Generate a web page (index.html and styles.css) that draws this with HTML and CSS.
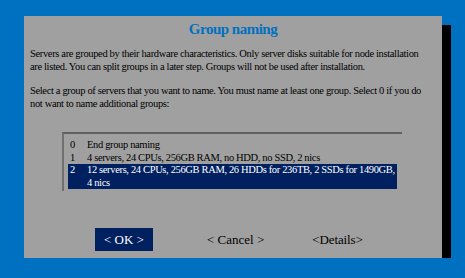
FILE: index.html
```html
<!DOCTYPE html>
<html>
<head>
<title>Group naming</title>
<link rel="stylesheet" href="styles.css">
</head>
<body>

<!-- the dialog box, shadow comes from box-shadow -->
<div class="dialog">
  <h1 class="title">Group naming</h1>

  <p class="msg">Servers are grouped by their hardware characteristics. Only server disks suitable for node installation are listed. You can split groups in a later step. Groups will not be used after installation.</p>

  <p class="msg">Select a group of servers that you want to name. You must name at least one group. Select 0 if you do not want to name additional groups:</p>

  <div class="menu">
    <div class="item">
      <span class="tag">0</span><span class="label">End group naming</span>
    </div>
    <div class="item">
      <span class="tag">1</span><span class="label">4 servers, 24 CPUs, 256GB RAM, no HDD, no SSD, 2 nics</span>
    </div>
    <div class="item selected">
      <span class="tag">2</span><span class="label">12 servers, 24 CPUs, 256GB RAM, 26 HDDs for 236TB, 2 SSDs for 1490GB, 4 nics</span>
    </div>
  </div>

  <div class="buttons">
    <span class="btn active">&lt; OK &gt;</span>
    <span class="btn cancel">&lt; Cancel &gt;</span>
    <span class="btn details">&lt;Details&gt;</span>
  </div>
</div>

</body>
</html>
```

FILE: styles.css
```css
body {
  margin: 0;
  background-color: #0070c0;
  font-family: "Liberation Serif", "Times New Roman", serif;
  font-size: 10.5px;
  letter-spacing: -0.35px;
  color: #000;
}

/* grey dialog with a hard black shadow */
.dialog {
  margin: 16px 0 0 24px;
  width: 418px;
  height: 242px;
  background-color: #a0a0a0;
  box-shadow: 9px 9px 0 #000;
  box-sizing: border-box;
  padding: 6px 12px 0 6px;
}

.title {
  margin: 0 0 0 6px;
  text-align: center;
  color: #0070c0;
  font-size: 15px;
  font-weight: bold;
  letter-spacing: -0.5px;
  line-height: 14px;
}

.msg {
  margin: 12px 0 0 0;
  line-height: 12.5px;
}

/* the list box */
.menu {
  margin: 22px 0 0 32px;
  width: 340px;
  border-top: 2px solid #606060;
  border-left: 2px solid #707070;
  padding: 5px 5px 2px 4px;
  box-sizing: border-box;
}

.item {
  display: flex;
  line-height: 12.5px;
  padding-left: 2px;
}

.item .tag {
  width: 17px;
  flex-shrink: 0;
}

.selected {
  background-color: #002060;
  color: #fff;
}

.buttons {
  display: flex;
  margin: 37px 0 0 65px;
}

.btn {
  height: 23px;
  line-height: 23px;
  font-size: 13px;
  letter-spacing: 0;
}

.active {
  background-color: #002060;
  color: #fff;
  padding: 0 9px;
}

.cancel {
  margin-left: 54px;
}

.details {
  margin-left: 48px;
  letter-spacing: -0.1px;
}
```
